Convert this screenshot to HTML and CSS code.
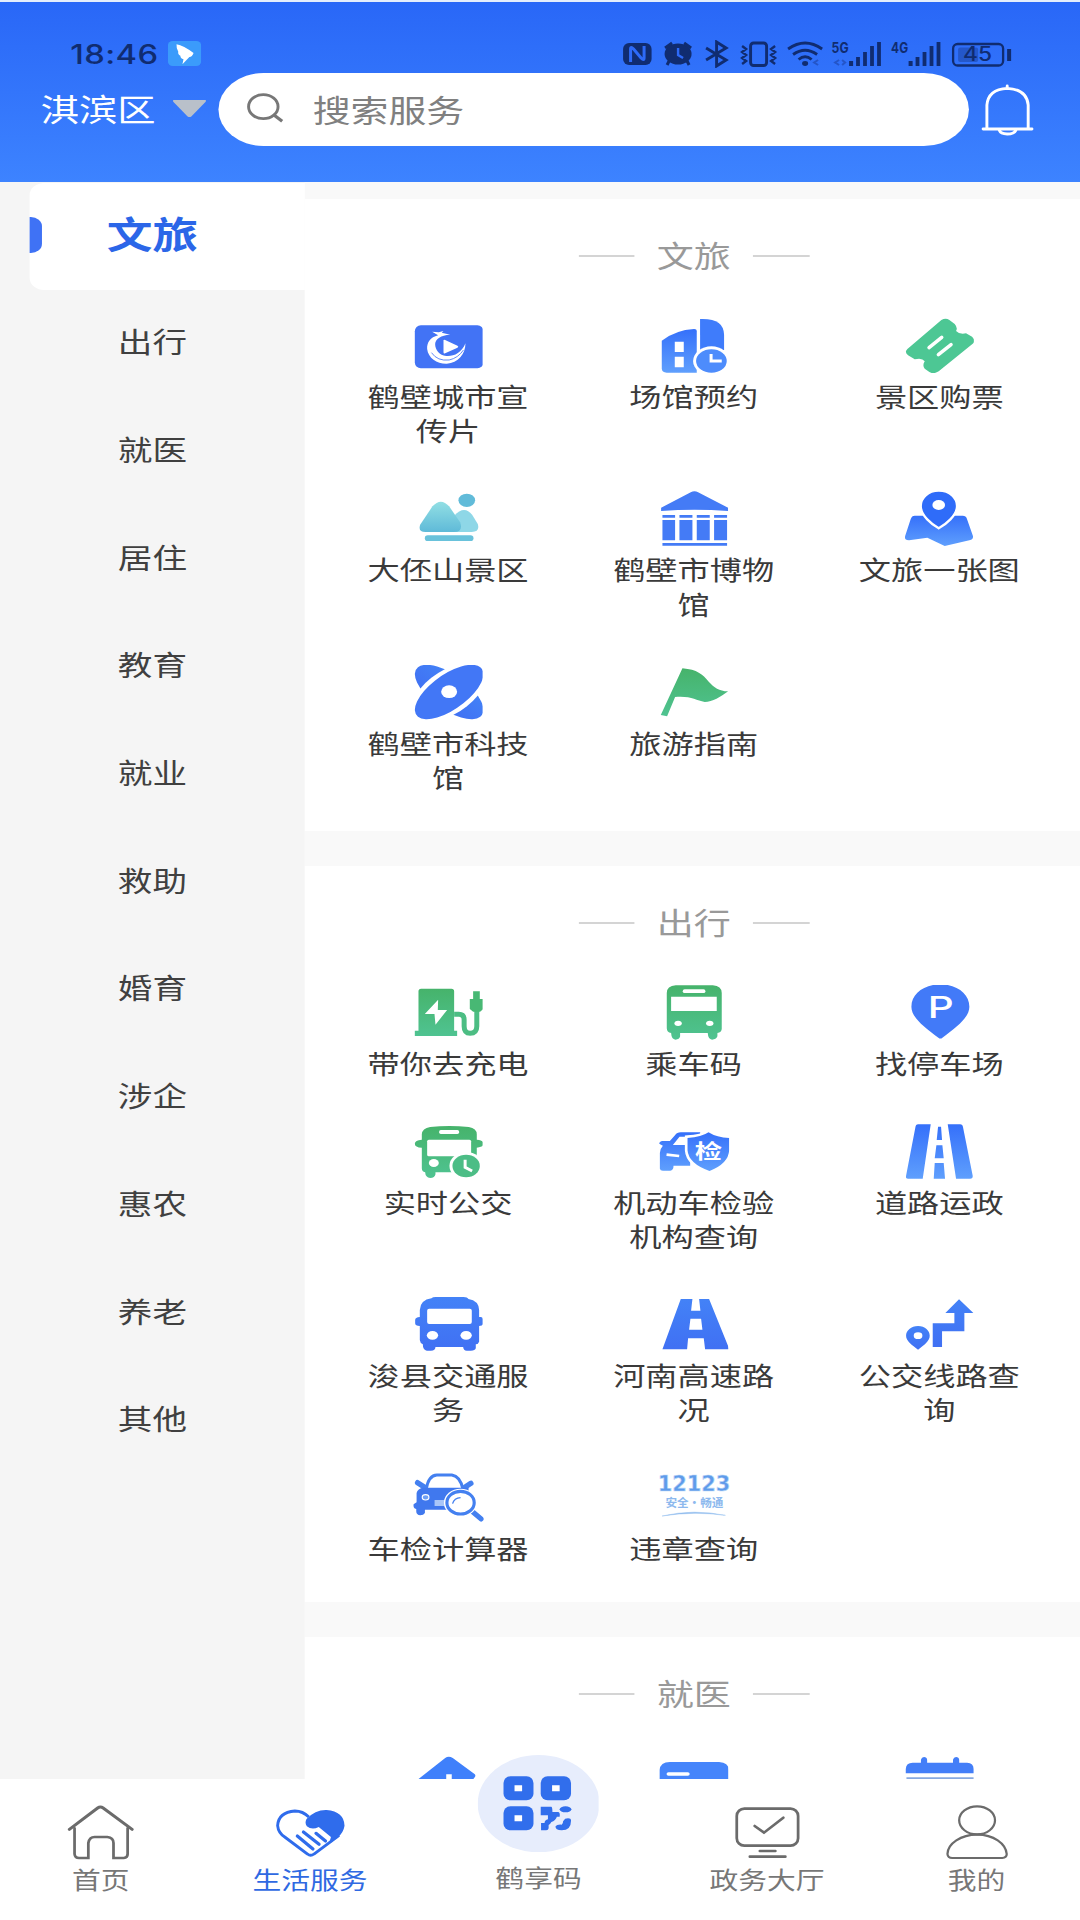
FILE: index.html
```html
<!DOCTYPE html>
<html lang="zh-CN">
<head>
<meta charset="utf-8">
<title>生活服务</title>
<link rel="stylesheet" href="styles.css">
</head>
<body>
<svg class="defs" width="0" height="0" aria-hidden="true">
  <defs>
    <linearGradient id="sky" x1="0" y1="0" x2="0" y2="1"><stop offset="0" stop-color="#3570fa"/><stop offset="1" stop-color="#5f9ffd"/></linearGradient>
    <linearGradient id="blue" x1="0" y1="0" x2="0" y2="1"><stop offset="0" stop-color="#4382f7"/><stop offset="1" stop-color="#4070f3"/></linearGradient>
    <linearGradient id="green" x1="0" y1="0" x2="0" y2="1"><stop offset="0" stop-color="#46b36b"/><stop offset="1" stop-color="#4fc391"/></linearGradient>
    <linearGradient id="aqua" x1="0" y1="0" x2="0" y2="1"><stop offset="0" stop-color="#92dfe4"/><stop offset="1" stop-color="#5fbad8"/></linearGradient>
  </defs>
</svg>
<div class="app">
  <header class="header">
    <div class="status">
      <span class="clock">18:46</span>
      <svg class="app-badge" viewBox="0 0 96 75" preserveAspectRatio="none"><rect width="96" height="75" rx="14" fill="#3b9bfb"/><path d="M25 10Q45 14 74 36Q70 48 62 48L42 70L45 55Q36 52 36 44Q28 40 30 32Q24 24 25 10Z" fill="#fff"/></svg>
      <svg class="status-icons" viewBox="622 40 390 28" preserveAspectRatio="none">
        <g fill="#102c70">
          <rect x="623" y="43" width="28.5" height="22" rx="6"/>
          <path d="M630.500 62V49Q630.500 46 633.500 49L641 58Q644 61 644 58V46" fill="none" stroke="#2d6af8" stroke-width="3"/>
          <ellipse cx="678" cy="54" rx="13.5" ry="10.5"/>
          <path d="M665 48L672 43M691 48L684 43M669 61L667 65M687 61L689 65" stroke="#102c70" stroke-width="3"/>
          <path d="M678 48V55L683 58" fill="none" stroke="#2d6af8" stroke-width="2.4"/>
        </g>
        <g fill="none" stroke="#102c70" stroke-width="2.9">
          <path d="M706 48L726 60L716.500 66V42L726 48L706 60"/>
          <rect x="750.500" y="43" width="16" height="22.500" rx="3"/>
          <path d="M742 46L746 49L742 52L746 55L742 58L746 61L742 64M775 46L771 49L775 52L771 55L775 58L771 61L775 64" stroke-width="2.4"/>
          <path d="M788 49Q805 37 822 49M793 54.500Q805 46 817 54.500M798.500 59.500Q805 54 811.500 59.500"/>
          <rect x="953" y="44" width="50" height="21.500" rx="4.500" stroke-width="2.300"/>
        </g>
        <g fill="#102c70">
          <ellipse cx="805" cy="63.500" rx="3" ry="2.400"/>
          <path d="M849 61h4v5h-4zM856 57h3.800v9h-3.800zM863 52h3.800v14h-3.800zM870 46h3.800v20h-3.800zM877 42h3.800v24h-3.800z"/>
          <path d="M908.500 61h4v5h-4zM915.500 57h3.800v9h-3.800zM922.500 52h3.800v14h-3.800zM929.500 46h3.800v20h-3.800zM936.500 42h3.800v24h-3.800z"/>
          <path d="M1007 49h4v12h-4z"/>
          <rect x="958" y="47.500" width="20" height="14.500" rx="2" opacity=".35"/>
        </g>
        <path d="M818 60L814 62.500L818 65M839 60L835 62.500L839 65M842 60L845 62.500L842 65" fill="none" stroke="#2455c8" stroke-width="2"/>
        <g class="status-text">
          <text x="831.500" y="53" font-size="14.500" textLength="17" lengthAdjust="spacingAndGlyphs">5G</text>
          <text x="891" y="53" font-size="14.500" textLength="17" lengthAdjust="spacingAndGlyphs">4G</text>
          <text class="charge" x="963" y="61.500" font-size="19.500" textLength="29" lengthAdjust="spacingAndGlyphs">45</text>
        </g>
      </svg>
    </div>
    <div class="search-row">
      <span class="district">淇滨区</span>
      <svg class="caret" viewBox="0 0 96 52" preserveAspectRatio="none"><path d="M3 0H93Q98 1 94 6L54 48Q48 54 42 48L2 6Q-2 1 3 0Z" fill="#b9c0ca"/></svg>
      <div class="search">
        <svg class="lens" viewBox="718 278 108 90" preserveAspectRatio="none"><ellipse cx="766" cy="319" rx="43" ry="36" fill="none" stroke="#777" stroke-width="8.500"/><path d="M797 344L821 363" stroke="#777" stroke-width="9.500"/></svg>
        <span>搜索服务</span>
      </div>
      <svg class="bell" viewBox="1276 252 160 156" preserveAspectRatio="none" fill="none" stroke="#fff" stroke-width="8.500" stroke-linecap="round"><path d="M1296 385V315Q1300 268 1355 265Q1412 268 1416 315V385M1285 387H1427M1355 258V265M1332 391Q1336 402 1355 402Q1375 402 1380 391"/></svg>
    </div>
  </header>

  <div class="content">
    <nav class="sidebar">
      <div class="side-item active">文旅</div>
      <div class="side-item">出行</div>
      <div class="side-item">就医</div>
      <div class="side-item">居住</div>
      <div class="side-item">教育</div>
      <div class="side-item">就业</div>
      <div class="side-item">救助</div>
      <div class="side-item">婚育</div>
      <div class="side-item">涉企</div>
      <div class="side-item">惠农</div>
      <div class="side-item">养老</div>
      <div class="side-item">其他</div>
    </nav>

    <main class="sections">
      <section class="card">
        <h2>文旅</h2>
        <div class="grid">
          <div class="tile">
            <svg class="icon" viewBox="218 54 210 165" preserveAspectRatio="none"><rect x="222" y="76" width="206" height="129" rx="18" fill="#4273f5"/><path d="M292 106C268 112 258 128 259 147C262 175 290 192 318 191C352 189 374 163 374 130C362 160 338 170 316 168C296 166 283 150 283 132C284 116 300 106 328 104L303 98L308 93L294 97L274 95Z" fill="#fff"/><path d="M272 158Q290 184 325 180Q352 174 368 150" fill="none" stroke="#4273f5" stroke-width="2.500"/><path d="M308 122Q308 118 313 120L350 137Q355 140 350 143L313 160Q308 162 308 157Z" fill="#fff"/></svg>
            <span>鹤壁城市宣传片</span>
          </div>
          <div class="tile">
            <svg class="icon" viewBox="955 54 210 165" preserveAspectRatio="none"><path d="M963 122Q1005 90 1060 87Q1068 87 1068 94V218H978Q963 218 963 205Z" fill="url(#sky)"/><path d="M1002 125h27v31h-27zM1002 170h27v32h-27z" fill="#fff"/><path d="M1078 57Q1150 54 1150 105V150H1078Z" fill="#3f7cfb"/><ellipse cx="1112" cy="183" rx="55" ry="44" fill="#fff"/><ellipse cx="1112" cy="183" rx="46" ry="35.500" fill="#4d8cfc"/><path d="M1111 162V183H1143" fill="none" stroke="#fff" stroke-width="9"/></svg>
            <span>场馆预约</span>
          </div>
          <div class="tile">
            <svg class="icon" viewBox="582 54 210 165" preserveAspectRatio="none"><path d="M692 60Q705 52 716 60L732 72Q742 84 736 93Q746 104 766 100L784 110Q796 122 786 131L684 214Q668 224 656 216L642 206Q634 196 642 184Q634 172 612 178L592 166Q580 156 590 147Z" fill="#4dc794"/><path d="M655 143L693 112M683 164L721 134" stroke="#fff" stroke-width="10.500" stroke-linecap="round"/></svg>
            <span>景区购票</span>
          </div>
          <div class="tile">
            <svg class="icon" viewBox="218 574 210 165" preserveAspectRatio="none"><path d="M340 648Q370 615 394 645L411 673Q418 697 393 697H340Z" fill="#8ed7e7"/><path d="M238 675L275 620Q300 592 325 620L358 668Q368 697 340 697H254Q231 697 238 675Z" fill="url(#aqua)"/><ellipse cx="378" cy="602" rx="25" ry="20" fill="#61bbd9"/><rect x="252" y="707" width="146" height="17" rx="9" fill="#69c2db"/></svg>
            <span>大伾山景区</span>
          </div>
          <div class="tile">
            <svg class="icon" viewBox="955 574 210 165" preserveAspectRatio="none" fill="#447bf6"><path d="M961 634V624L1050 578Q1061 572 1072 578L1162 624V634Q1061 626 961 634Z"/><path d="M965 646h38v8h-38zM1016 646h39v8h-39zM1068 646h39v8h-39zM1120 646h39v8h-39zM965 661h38v61h-38zM1016 661h39v61h-39zM1068 661h39v61h-39zM1120 661h39v61h-39zM965 730h194v8h-194z"/></svg>
            <span>鹤壁市博物馆</span>
          </div>
          <div class="tile">
            <svg class="icon" viewBox="582 576 210 165" preserveAspectRatio="none"><path d="M612 650H756Q766 650 768 658L787 712Q788 722 776 724L702 741L650 716L595 724Q580 724 583 712L600 660Q603 650 612 650Z" fill="url(#sky)"/><path d="M684 575C718 575 739 597 739 621C739 650 704 677 684 688C664 677 630 650 630 621C630 597 652 575 684 575Z" fill="#2f6cf9" stroke="#fff" stroke-width="7"/><ellipse cx="684" cy="618" rx="19" ry="15" fill="#fff"/></svg>
            <span>文旅一张图</span>
          </div>
          <div class="tile">
            <svg class="icon" viewBox="218 74 210 165" preserveAspectRatio="none"><g transform="translate(325 155) scale(1.260 1)"><ellipse rx="105" ry="48" transform="rotate(45)" fill="url(#blue)"/><ellipse rx="114" ry="60" transform="rotate(-45)" fill="#fff"/><ellipse rx="105" ry="48" transform="rotate(-45)" fill="#4277f6"/></g><ellipse cx="325" cy="154" rx="24" ry="19" fill="#fff"/></svg>
            <span>鹤壁市科技馆</span>
          </div>
          <div class="tile">
            <svg class="icon" viewBox="955 74 210 165" preserveAspectRatio="none"><path d="M1025 84C1070 88 1085 102 1104 124C1120 142 1135 152 1162 153C1140 170 1115 185 1092 185C1065 180 1050 166 1003 170L979 228L960 224Z" fill="url(#green)"/></svg>
            <span>旅游指南</span>
          </div>
        </div>
      </section>

      <section class="card">
        <h2>出行</h2>
        <div class="grid">
          <div class="tile">
            <svg class="icon" viewBox="218 46 210 165" preserveAspectRatio="none"><path d="M241 57H332Q340 57 340 65V183H349V199H222V183H233V65Q233 57 241 57Z" fill="url(#green)"/><path d="M292 90L252 133H281L284 165L319 121H291Z" fill="#fff"/><path d="M340 134H354Q370 134 370 150V170Q370 191 388 191Q408 191 408 170V115" fill="none" stroke="#4cbd83" stroke-width="15"/><path d="M397 65h20v23h11v30l-10 8h-21l-10 -8v-30h10z" fill="#48b874"/></svg>
            <span>带你去充电</span>
          </div>
          <div class="tile">
            <svg class="icon" viewBox="955 46 210 165" preserveAspectRatio="none"><path d="M1005 47H1116Q1143 49 1143 70V178Q1142 188 1130 190V200Q1126 210 1114 210Q1102 209 1101 190H1018V200Q1016 210 1004 210Q992 209 991 190Q978 188 978 176V70Q978 49 1005 47Z" fill="url(#green)"/><path d="M991 81h137v43h-137z" fill="#fff"/><rect x="1026" y="59" width="68" height="11" rx="5.500" fill="#fff"/><ellipse cx="1012" cy="161" rx="11" ry="8" fill="#fff"/><ellipse cx="1107" cy="161" rx="11" ry="8" fill="#fff"/></svg>
            <span>乘车码</span>
          </div>
          <div class="tile">
            <svg class="icon" viewBox="583 43 210 165" preserveAspectRatio="none"><path d="M690 41C740 41 777 70 777 108C777 138 745 165 696 201Q690 206 684 201C635 165 603 138 603 108C603 70 640 41 690 41Z" fill="#427af8"/><text class="pin-letter" x="652" y="142" textLength="78" lengthAdjust="spacingAndGlyphs">P</text></svg>
            <span>找停车场</span>
          </div>
          <div class="tile">
            <svg class="icon" viewBox="218 459 210 165" preserveAspectRatio="none"><path d="M268 468Q325 462 384 468Q408 472 408 490V506Q428 507 428 518Q428 529 408 530V604H284V610Q282 621 268 621Q254 620 253 604Q243 602 243 592V530Q222 529 222 518Q222 507 243 506V490Q244 472 268 468Z" fill="url(#green)"/><rect x="259" y="506" width="132" height="50" rx="5" fill="#fff"/><rect x="295" y="477" width="60" height="12" rx="5" fill="#fff"/><ellipse cx="279" cy="576" rx="15" ry="12" fill="#fff"/><ellipse cx="376" cy="585" rx="50" ry="42" fill="#fff"/><path d="M405 556L424 550V610H405Z" fill="#fff"/><ellipse cx="376" cy="585" rx="41" ry="33.500" fill="#4cbd86"/><path d="M373 566V589L394 600" fill="none" stroke="#fff" stroke-width="9"/></svg>
            <span>实时公交</span>
          </div>
          <div class="tile">
            <svg class="icon wide" viewBox="953 461 216 165" preserveAspectRatio="none"><path d="M1080 486H1022Q1010 486 1005 494L989 512H965Q957 514 957 520L968 526Q960 534 959 548V595Q960 601 968 601H990Q1000 600 1000 586H1050V524H998L1018 499H1080Z" fill="url(#sky)"/><path d="M979 553L1017 557" stroke="#fff" stroke-width="8"/><path d="M1042 503Q1085 500 1105 486Q1130 502 1167 503V540Q1165 580 1108 602Q1045 580 1042 540Z" fill="url(#sky)" stroke="#fff" stroke-width="16" paint-order="stroke"/><text class="shield-letter" x="1064" y="565" textLength="82" lengthAdjust="spacingAndGlyphs">检</text></svg>
            <span>机动车检验机构查询</span>
          </div>
          <div class="tile">
            <svg class="icon" viewBox="582 460 210 165" preserveAspectRatio="none" fill="url(#sky)"><path d="M622 461H660L636 624H592Q584 624 586 615L614 470Q615 461 622 461ZM711 461H748Q756 461 757 470L786 615Q787 624 778 624H736ZM682 468H691L694 508H678ZM677 524H695L699 563H672ZM672 577H699L703 624H669Z"/></svg>
            <span>道路运政</span>
          </div>
          <div class="tile">
            <svg class="icon" viewBox="218 51 210 165" preserveAspectRatio="none"><path d="M272 55Q275 51 285 51H368Q380 51 383 57Q414 62 415 90V111H420Q427 112 427 120V130Q427 138 415 138V185Q412 193 405 193V205Q403 212 390 212H378Q368 212 367 201H284Q284 212 270 212H258Q246 211 246 193Q238 190 237 180V138Q223 138 223 130V120Q223 112 237 111V90Q238 60 272 55Z" fill="url(#blue)"/><rect x="259" y="86" width="134" height="46" rx="6" fill="#fff"/><ellipse cx="275" cy="166" rx="17" ry="13" fill="#fff"/><ellipse cx="376" cy="166" rx="17" ry="13" fill="#fff"/></svg>
            <span>浚县交通服务</span>
          </div>
          <div class="tile">
            <svg class="icon" viewBox="955 51 210 165" preserveAspectRatio="none"><path fill-rule="evenodd" d="M1020 57H1055L1051 92H1079L1075 57H1105L1166 208H1093L1089 175H1042L1039 208H965ZM1049 116L1045 149H1085L1081 116Z" fill="url(#blue)"/></svg>
            <span>河南高速路况</span>
          </div>
          <div class="tile">
            <svg class="icon" viewBox="582 51 210 165" preserveAspectRatio="none" fill="url(#blue)"><path d="M745 58L788 99H761V154H694V201H666V130H731V99H704Z"/><path fill-rule="evenodd" d="M622 138C643 138 657 152 657 167C657 183 640 195 622 209C604 195 586 183 586 167C586 152 601 138 622 138ZM622 157A13 10 0 1 0 622 177A13 10 0 1 0 622 157Z"/></svg>
            <span>公交线路查询</span>
          </div>
          <div class="tile">
            <svg class="icon wide" viewBox="216 571 216 165" preserveAspectRatio="none"><path d="M258 628Q265 587 290 586H335Q360 590 368 628" fill="none" stroke="#4480f0" stroke-width="9"/><path d="M232 609L252 622M392 611L375 622" stroke="#4480f0" stroke-width="16" stroke-linecap="round"/><path d="M250 624H385V690H254V700Q250 707 240 707Q228 706 228 695V688Q218 686 220 674L229 668V640Q232 626 250 624Z" fill="#4078ee"/><ellipse cx="256" cy="653" rx="10" ry="8" fill="#6fa0f5" stroke="#fff" stroke-width="3.500"/><rect x="283" y="661" width="30" height="18" fill="#a9c6f8"/><path d="M398 697L423 718" stroke="#4480f0" stroke-width="15" stroke-linecap="round"/><ellipse cx="361" cy="669" rx="50" ry="42" fill="#fff"/><ellipse cx="361" cy="669" rx="41" ry="34" fill="#fff" stroke="#4480f0" stroke-width="9.500"/><path d="M337 672Q342 655 361 654" fill="none" stroke="#4480f0" stroke-width="4"/></svg>
            <span>车检计算器</span>
          </div>
          <div class="tile">
            <svg class="icon hotline-mark" viewBox="945 573 230 165" preserveAspectRatio="none"><text class="hotline" x="952" y="637" textLength="218" lengthAdjust="spacingAndGlyphs">12123</text><text class="hotline-sub" x="975" y="684" textLength="174" lengthAdjust="spacingAndGlyphs">安全·畅通</text><path d="M965 711Q1060 689 1155 709Q1060 696 965 711Z" fill="#7fb0ea" stroke="#9cc4f0" stroke-width="1.500"/></svg>
            <span>违章查询</span>
          </div>
        </div>
      </section>

      <section class="card">
        <h2>就医</h2>
        <div class="grid">
          <div class="tile"><svg class="icon" viewBox="1198 108 203 165" preserveAspectRatio="none"><path d="M1290 114Q1300 107 1312 114L1376 163Q1380 168 1374 174L1366 184H1309V163H1293V184H1204Z" fill="#3f80fb"/></svg></div>
          <div class="tile"><svg class="icon" viewBox="343.500 108 206 165" preserveAspectRatio="none"><path d="M345 260V150Q347 126 375 126H520Q548 128 549 150V260Z" fill="#4585fb"/><path d="M371 162H428" stroke="#fff" stroke-width="11" stroke-linecap="round"/></svg></div>
          <div class="tile"><svg class="icon" viewBox="1057 109 203 165" preserveAspectRatio="none" fill="#437ef8"><path d="M1060 161V148Q1061 129 1080 129H1104V120Q1106 112 1113 112Q1121 112 1122 120V129H1197V120Q1199 112 1206 112Q1214 112 1215 120V129H1238Q1257 130 1257 148V161Z"/><path d="M1062 173h195v60h-195z" fill="#86a8e0"/></svg></div>
        </div>
      </section>
    </main>
  </div>

  <footer class="tabbar">
    <div class="tab">
      <svg class="tab-icon" viewBox="190.500 256 203 165" preserveAspectRatio="none" fill="none" stroke="#6b6b6b" stroke-width="8" stroke-linecap="round"><path d="M217 326V403Q218 415 230 415H257V370Q260 352 275 352H312Q330 354 330 370V415H360Q371 414 371 403V326"/><path d="M202 329L284 265Q292 259 300 265L384 329" stroke-width="9"/></svg>
      <span>首页</span>
    </div>
    <div class="tab current">
      <svg class="tab-icon" viewBox="797 256 206 165" preserveAspectRatio="none"><path d="M896 292Q878 274 855 274Q806 278 804 318Q806 340 825 352L892 403Q901 411 911 403L985 347" fill="none" stroke="#2f6cec" stroke-width="8.500"/><path d="M889 298Q915 270 948 271Q1000 276 1001 318Q998 338 982 352L955 373L961 352L925 322Q905 332 890 320Q883 310 889 298Z" fill="#2f6cec"/><path d="M862 349L908 388M880 337L926 374M917 341L945 364" stroke="#2f6cec" stroke-width="9.500" stroke-linecap="round"/></svg>
      <span>生活服务</span>
    </div>
    <div class="tab code">
      <svg class="qr" viewBox="1386 105 354 292" preserveAspectRatio="none"><ellipse cx="1563" cy="251" rx="177" ry="146" fill="#e7edfc"/><g fill="#316eec"><rect x="1461" y="169" width="87" height="72" rx="20"/><rect x="1569" y="169" width="88" height="72" rx="20"/><rect x="1461" y="259" width="87" height="72" rx="20"/><path d="M1569 260H1600Q1603 261 1603 276H1620Q1626 278 1624 290H1616Q1612 302 1600 306Q1596 313 1592 315V325Q1591 331 1585 331H1570V309H1580Q1581 300 1590 298V286H1569Z"/><ellipse cx="1641" cy="268" rx="17" ry="9"/><path d="M1640 296Q1657 292 1657 302Q1657 331 1630 331Q1611 331 1612 319Q1616 313 1630 314Q1634 312 1634 304Z"/></g><path d="M1493 196h22v18h-22zM1602 196h22v18h-22zM1493 286h22v18h-22z" fill="#fff"/></svg>
      <span>鹤享码</span>
    </div>
    <div class="tab">
      <svg class="tab-icon" viewBox="556 256 203 165" preserveAspectRatio="none" fill="none" stroke="#6b6b6b" stroke-width="8" stroke-linecap="round"><rect x="570" y="267" width="178" height="111" rx="22"/><path d="M622 319L649 339L705 294M637 394H682M608 411H711"/></svg>
      <span>政务大厅</span>
    </div>
    <div class="tab">
      <svg class="tab-icon" viewBox="1164.500 256 203 165" preserveAspectRatio="none" fill="none" stroke="#6b6b6b" stroke-width="6.500"><ellipse cx="1267" cy="302" rx="52" ry="42"/><path d="M1267 345C1220 345 1182 372 1181 403Q1182 415 1195 415H1340Q1353 414 1353 403C1350 372 1315 345 1267 345Z"/></svg>
      <span>我的</span>
    </div>
  </footer>
</div>
</body>
</html>
```

FILE: styles.css
```css
* { box-sizing: border-box; }

body {
  margin: 0;
  width: 1080px;
  height: 1920px;
  overflow: hidden;
  background: #fff;
  font-family: "Noto Sans CJK SC", "Noto Sans", sans-serif;
  color: #3a3a3a;
}

svg { display: block; flex: none; }
.defs { position: absolute; }

/* The app is laid out 875px wide and stretched sideways to fill the window. */
.app {
  width: 875px;
  height: 1920px;
  display: flex;
  flex-direction: column;
  overflow: hidden;
  transform: scaleX(1.234286);
  transform-origin: 0 0;
}

.header {
  height: 182px;
  flex: none;
  padding-top: 38px;
  border-top: 2px solid #e4edfc;
  background: linear-gradient(#2967f7, #3d83ff);
}

.status {
  height: 28px;
  display: flex;
  align-items: center;
  padding: 0 55px 0 57px;
}
.clock {
  width: 71px;
  font: 500 26.5px/28px Inter, sans-serif;
  letter-spacing: .3px;
  color: #102c70;
  white-space: nowrap;
}
.app-badge { width: 27px; height: 25px; margin-left: 7.500px; margin-bottom: 2px; }
.status-icons { width: 316px; height: 28px; margin-left: auto; }
.status-text {
  font-family: Inter, sans-serif;
  font-weight: 700;
  fill: #102c70;
}
.status-text .charge { font-weight: 500; }

.search-row {
  height: 73px;
  margin-top: 5px;
  display: flex;
  align-items: center;
  padding-left: 33px;
}
.district {
  width: 107.300px;
  padding-bottom: 3px;
  font-size: 31px;
  line-height: 40px;
  color: #fff;
}
.caret { width: 27px; height: 17.500px; margin-bottom: 2px; }
.search {
  width: 607.500px;
  height: 73px;
  margin-left: 10px;
  display: flex;
  align-items: center;
  padding: 0 0 3px 23px;
  border-radius: 37px;
  background: #fff;
  font-size: 30.700px;
  color: #808080;
}
.lens { width: 30px; height: 30px; margin-right: 23px; }
.bell { width: 44.600px; height: 52px; margin-left: 9px; }

.content {
  flex: 1;
  min-height: 0;
  display: flex;
  overflow: hidden;
}

.sidebar {
  width: 247px;
  flex: none;
  padding-top: 1px;
  background: #f5f5f5;
}
.side-item {
  height: 107.700px;
  display: flex;
  align-items: center;
  justify-content: center;
  padding-bottom: 4px;
  font-size: 28px;
  color: #404040;
}
.side-item.active {
  position: relative;
  height: 106.500px;
  margin-left: 24px;
  padding-right: 24px;
  padding-bottom: 6px;
  border-radius: 12px 0 0 12px;
  background: #fff;
  font-size: 37px;
  font-weight: 700;
  color: #2b66e8;
}
.side-item.active::before {
  content: "";
  position: absolute;
  left: 0;
  top: 34px;
  width: 9.500px;
  height: 36px;
  border-radius: 0 9px 9px 0;
  background: #3f72f5;
}

.sections {
  flex: 1;
  display: flex;
  flex-direction: column;
  gap: 34.300px;
  padding-top: 17px;
  background: #f9f9f9;
}
.card {
  flex: none;
  padding: 34px 14.500px 37px 16.500px;
  background: #fff;
}
.card h2 {
  display: flex;
  align-items: center;
  justify-content: center;
  gap: 18px;
  height: 42px;
  margin: 0 0 43px;
  font-size: 30px;
  font-weight: 400;
  color: #999;
}
.card h2::before,
.card h2::after {
  content: "";
  width: 45.500px;
  height: 2px;
  margin-top: 4px;
  background: #d4d4d4;
}
.grid {
  display: grid;
  grid-template-columns: repeat(3, 1fr);
  row-gap: 43.600px;
}
.tile {
  display: flex;
  flex-direction: column;
  align-items: center;
  gap: 6.100px;
}
.icon { width: 56.700px; height: 55px; }
.icon.wide { width: 58.300px; }
.icon.hotline-mark { width: 62.100px; }
.tile span {
  width: 131px;
  font-size: 26.100px;
  line-height: 34.300px;
  text-align: center;
}
.pin-letter { font: 500 90px Inter, sans-serif; fill: #fff; }
.shield-letter { font: 700 60px "Noto Sans CJK SC", sans-serif; fill: #fff; }
.hotline { font: 700 66px "DejaVu Sans", sans-serif; fill: #5f9bea; stroke: #bcd8f8; stroke-width: 2px; }
.hotline-sub { font: 700 34px "Noto Sans CJK SC", sans-serif; fill: #8db9ee; }

.tabbar {
  position: relative;
  height: 141px;
  flex: none;
  display: grid;
  grid-template-columns: 163.300px 175.800px 194.400px 175.800px 163.600px;
  background: #fff;
}
.tab {
  position: relative;
  display: flex;
  flex-direction: column;
  align-items: center;
  padding-top: 26px;
  gap: 4px;
  font-size: 23.300px;
  line-height: 30px;
  color: #777;
}
.tab.current { color: #2f69e2; }
.tab-icon { width: 56.700px; height: 55px; }
.tab.code { padding-top: 82.500px; }
.qr {
  position: absolute;
  top: -24px;
  left: 47.500px;
  width: 98.800px;
  height: 97.300px;
}
```
